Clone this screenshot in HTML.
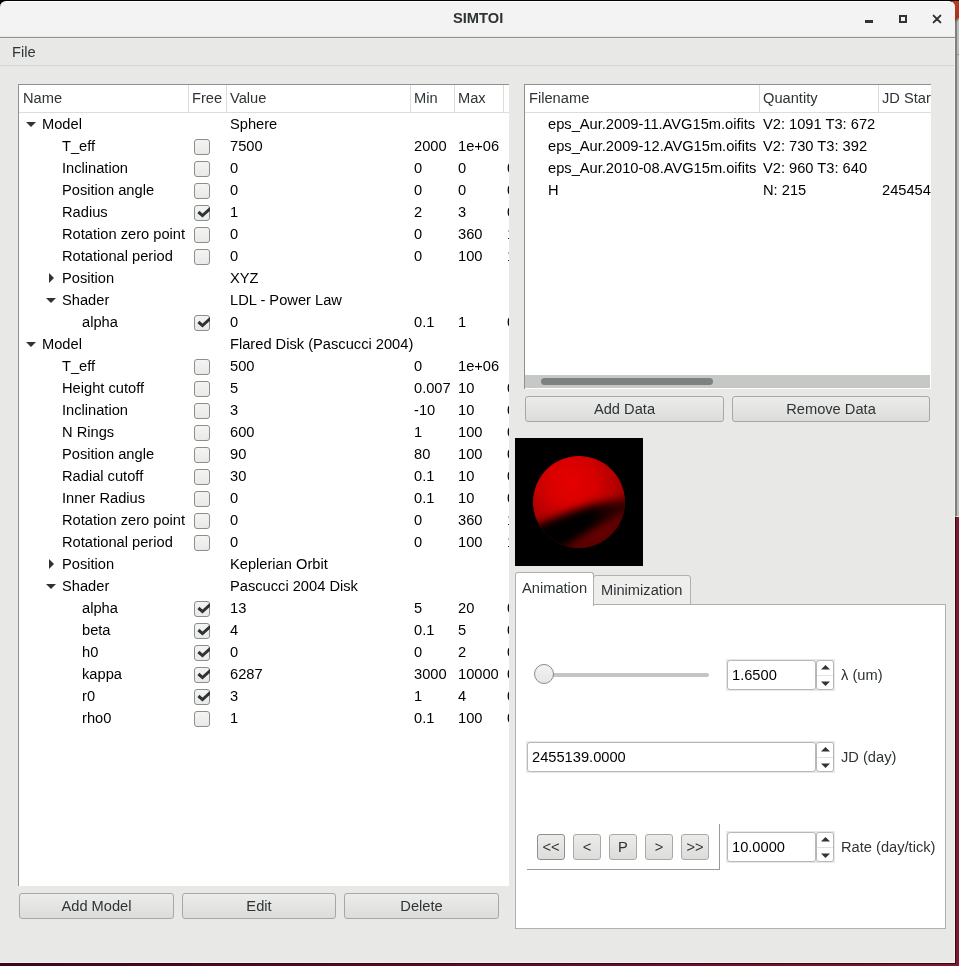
<!DOCTYPE html><html><head><meta charset="utf-8"><style>
*{box-sizing:border-box;margin:0;padding:0}
html,body{width:959px;height:966px;overflow:hidden}
body{position:relative;-webkit-font-smoothing:antialiased;will-change:transform;background:linear-gradient(90deg,#3d0426 0%,#5a0c2c 50%,#7a1a2e 100%);font-family:"Liberation Sans",sans-serif;font-size:14.67px;color:#2e3436}
.a{position:absolute}
.t{position:absolute;white-space:nowrap;line-height:22px;height:22px}
.k{color:#000}
#win{left:0;top:517px;width:956px;height:447px;background:#380614}
#title{left:0;top:1px;width:955px;height:37px;background:linear-gradient(#f3f3f3 0,#f3f3f3 33px,#e6e6e5 35px);border-radius:6px 6px 0 0;border-top:1px solid #fff;border-bottom:1px solid #8f908b}
#main{left:0;top:38px;width:955px;height:925px;background:linear-gradient(#efefee 0,#e8e8e7 1px);border-right:1px solid #f1f2f0;border-bottom:1px solid #f2f3f1}
#menusep{left:0;top:65px;width:954px;height:1px;background:#d5d5d3}
.box{position:absolute;background:#fff;border-left:1px solid #8f918d;border-top:1px solid #8f918d;overflow:hidden}
.hl{position:absolute;left:0;top:27px;height:1px;background:#dcdcda}
.hs{position:absolute;top:0;width:1px;height:27px;background:#dcdcda}
.cb{position:absolute;width:16px;height:16px;border:1px solid #8c8e8b;border-radius:3px;background:linear-gradient(#f4f4f3,#e9e9e8)}
.cb svg{position:absolute;left:-1px;top:-1px}
.btn{position:absolute;height:26px;border:1px solid #a7a8a4;border-radius:3px;background:linear-gradient(#ececeb,#dcdcda);text-align:center;line-height:24px;color:#2e3436}
.ar{position:absolute;width:0;height:0}
</style></head><body>
<div class="a" style="left:950px;top:0;width:9px;height:24px;background:linear-gradient(#c03a26,#a02a1c)"></div>
<div class="a" style="left:955px;top:18px;width:6px;height:499px;background:#bcbcbb;border-left:2px solid #7f7f7f;border-top:1px solid #9a9a98;border-bottom:1px solid #e8e8e8;border-radius:5px 0 0 0"></div>
<div class="a" style="left:956px;top:54px;width:3px;height:1px;background:#8c8c8a"></div>
<div class="a" style="left:0;top:0;width:12px;height:12px;background:#000"></div><div class="a" style="left:940px;top:0;width:12px;height:12px;background:#000"></div>
<div class="a" id="win"></div><div class="a" id="title"></div><div class="a" id="main"></div>
<div class="a" style="left:0;top:0;width:959px;height:1px;background:#000"></div>
<div class="a" style="left:865px;top:20px;width:8px;height:3px;background:#2e3436"></div>
<div class="a" style="left:899px;top:15px;width:8px;height:8px;border:2px solid #2e3436"></div>
<svg class="a" style="left:932px;top:14px" width="10" height="10"><path d="M1.6 1.6 L8.4 8.4 M8.4 1.6 L1.6 8.4" stroke="#2e3436" stroke-width="2" stroke-linecap="round"/></svg>
<div class="t" style="left:453px;top:7px;font-weight:bold">SIMTOI</div>
<div class="a" id="menusep"></div>
<div class="t" style="left:12px;top:41px">File</div>
<div class="box" style="left:18px;top:84px;width:491px;height:802px">
<div class="hl" style="width:600px;top:27px"></div>
<div class="hs" style="left:169px;top:0;height:27px"></div>
<div class="hs" style="left:207px;top:0;height:27px"></div>
<div class="hs" style="left:391px;top:0;height:27px"></div>
<div class="hs" style="left:435px;top:0;height:27px"></div>
<div class="hs" style="left:484px;top:0;height:27px"></div>
<div class="t" style="left:4px;top:2px">Name</div>
<div class="t" style="left:173px;top:2px">Free</div>
<div class="t" style="left:211px;top:2px">Value</div>
<div class="t" style="left:395px;top:2px">Min</div>
<div class="t" style="left:439px;top:2px">Max</div>
<div class="t k" style="left:23px;top:28px">Model</div>
<svg class="a" style="left:7px;top:37px" width="10" height="5"><path d="M0 0 L10 0 L5 5 Z" fill="#2e3436"/></svg>
<div class="t k" style="left:211px;top:28px">Sphere</div>
<div class="t k" style="left:43px;top:50px">T_eff</div>
<div class="cb" style="left:175px;top:54px"></div>
<div class="t k" style="left:211px;top:50px">7500</div>
<div class="t k" style="left:395px;top:50px">2000</div>
<div class="t k" style="left:439px;top:50px">1e+06</div>
<div class="t k" style="left:43px;top:72px">Inclination</div>
<div class="cb" style="left:175px;top:76px"></div>
<div class="t k" style="left:211px;top:72px">0</div>
<div class="t k" style="left:395px;top:72px">0</div>
<div class="t k" style="left:439px;top:72px">0</div>
<div class="t k" style="left:488px;top:72px">0</div>
<div class="t k" style="left:43px;top:94px">Position angle</div>
<div class="cb" style="left:175px;top:98px"></div>
<div class="t k" style="left:211px;top:94px">0</div>
<div class="t k" style="left:395px;top:94px">0</div>
<div class="t k" style="left:439px;top:94px">0</div>
<div class="t k" style="left:488px;top:94px">0</div>
<div class="t k" style="left:43px;top:116px">Radius</div>
<div class="cb" style="left:175px;top:120px"><svg width="16" height="16" viewBox="0 0 16 16"><path d="M4.4 7.0 L8.5 10.6 L16.5 3.4" fill="none" stroke="#2e3436" stroke-width="3" stroke-linejoin="miter"/></svg></div>
<div class="t k" style="left:211px;top:116px">1</div>
<div class="t k" style="left:395px;top:116px">2</div>
<div class="t k" style="left:439px;top:116px">3</div>
<div class="t k" style="left:488px;top:116px">0</div>
<div class="t k" style="left:43px;top:138px">Rotation zero point</div>
<div class="cb" style="left:175px;top:142px"></div>
<div class="t k" style="left:211px;top:138px">0</div>
<div class="t k" style="left:395px;top:138px">0</div>
<div class="t k" style="left:439px;top:138px">360</div>
<div class="t k" style="left:488px;top:138px">1</div>
<div class="t k" style="left:43px;top:160px">Rotational period</div>
<div class="cb" style="left:175px;top:164px"></div>
<div class="t k" style="left:211px;top:160px">0</div>
<div class="t k" style="left:395px;top:160px">0</div>
<div class="t k" style="left:439px;top:160px">100</div>
<div class="t k" style="left:488px;top:160px">1</div>
<div class="t k" style="left:43px;top:182px">Position</div>
<svg class="a" style="left:30px;top:188px" width="5" height="10"><path d="M0 0 L5 5 L0 10 Z" fill="#2e3436"/></svg>
<div class="t k" style="left:211px;top:182px">XYZ</div>
<div class="t k" style="left:43px;top:204px">Shader</div>
<svg class="a" style="left:27px;top:213px" width="10" height="5"><path d="M0 0 L10 0 L5 5 Z" fill="#2e3436"/></svg>
<div class="t k" style="left:211px;top:204px">LDL - Power Law</div>
<div class="t k" style="left:63px;top:226px">alpha</div>
<div class="cb" style="left:175px;top:230px"><svg width="16" height="16" viewBox="0 0 16 16"><path d="M4.4 7.0 L8.5 10.6 L16.5 3.4" fill="none" stroke="#2e3436" stroke-width="3" stroke-linejoin="miter"/></svg></div>
<div class="t k" style="left:211px;top:226px">0</div>
<div class="t k" style="left:395px;top:226px">0.1</div>
<div class="t k" style="left:439px;top:226px">1</div>
<div class="t k" style="left:488px;top:226px">0</div>
<div class="t k" style="left:23px;top:248px">Model</div>
<svg class="a" style="left:7px;top:257px" width="10" height="5"><path d="M0 0 L10 0 L5 5 Z" fill="#2e3436"/></svg>
<div class="t k" style="left:211px;top:248px">Flared Disk (Pascucci 2004)</div>
<div class="t k" style="left:43px;top:270px">T_eff</div>
<div class="cb" style="left:175px;top:274px"></div>
<div class="t k" style="left:211px;top:270px">500</div>
<div class="t k" style="left:395px;top:270px">0</div>
<div class="t k" style="left:439px;top:270px">1e+06</div>
<div class="t k" style="left:43px;top:292px">Height cutoff</div>
<div class="cb" style="left:175px;top:296px"></div>
<div class="t k" style="left:211px;top:292px">5</div>
<div class="t k" style="left:395px;top:292px">0.007</div>
<div class="t k" style="left:439px;top:292px">10</div>
<div class="t k" style="left:488px;top:292px">0</div>
<div class="t k" style="left:43px;top:314px">Inclination</div>
<div class="cb" style="left:175px;top:318px"></div>
<div class="t k" style="left:211px;top:314px">3</div>
<div class="t k" style="left:395px;top:314px">-10</div>
<div class="t k" style="left:439px;top:314px">10</div>
<div class="t k" style="left:488px;top:314px">0</div>
<div class="t k" style="left:43px;top:336px">N Rings</div>
<div class="cb" style="left:175px;top:340px"></div>
<div class="t k" style="left:211px;top:336px">600</div>
<div class="t k" style="left:395px;top:336px">1</div>
<div class="t k" style="left:439px;top:336px">100</div>
<div class="t k" style="left:488px;top:336px">0</div>
<div class="t k" style="left:43px;top:358px">Position angle</div>
<div class="cb" style="left:175px;top:362px"></div>
<div class="t k" style="left:211px;top:358px">90</div>
<div class="t k" style="left:395px;top:358px">80</div>
<div class="t k" style="left:439px;top:358px">100</div>
<div class="t k" style="left:488px;top:358px">0</div>
<div class="t k" style="left:43px;top:380px">Radial cutoff</div>
<div class="cb" style="left:175px;top:384px"></div>
<div class="t k" style="left:211px;top:380px">30</div>
<div class="t k" style="left:395px;top:380px">0.1</div>
<div class="t k" style="left:439px;top:380px">10</div>
<div class="t k" style="left:488px;top:380px">0</div>
<div class="t k" style="left:43px;top:402px">Inner Radius</div>
<div class="cb" style="left:175px;top:406px"></div>
<div class="t k" style="left:211px;top:402px">0</div>
<div class="t k" style="left:395px;top:402px">0.1</div>
<div class="t k" style="left:439px;top:402px">10</div>
<div class="t k" style="left:488px;top:402px">0</div>
<div class="t k" style="left:43px;top:424px">Rotation zero point</div>
<div class="cb" style="left:175px;top:428px"></div>
<div class="t k" style="left:211px;top:424px">0</div>
<div class="t k" style="left:395px;top:424px">0</div>
<div class="t k" style="left:439px;top:424px">360</div>
<div class="t k" style="left:488px;top:424px">1</div>
<div class="t k" style="left:43px;top:446px">Rotational period</div>
<div class="cb" style="left:175px;top:450px"></div>
<div class="t k" style="left:211px;top:446px">0</div>
<div class="t k" style="left:395px;top:446px">0</div>
<div class="t k" style="left:439px;top:446px">100</div>
<div class="t k" style="left:488px;top:446px">1</div>
<div class="t k" style="left:43px;top:468px">Position</div>
<svg class="a" style="left:30px;top:474px" width="5" height="10"><path d="M0 0 L5 5 L0 10 Z" fill="#2e3436"/></svg>
<div class="t k" style="left:211px;top:468px">Keplerian Orbit</div>
<div class="t k" style="left:43px;top:490px">Shader</div>
<svg class="a" style="left:27px;top:499px" width="10" height="5"><path d="M0 0 L10 0 L5 5 Z" fill="#2e3436"/></svg>
<div class="t k" style="left:211px;top:490px">Pascucci 2004 Disk</div>
<div class="t k" style="left:63px;top:512px">alpha</div>
<div class="cb" style="left:175px;top:516px"><svg width="16" height="16" viewBox="0 0 16 16"><path d="M4.4 7.0 L8.5 10.6 L16.5 3.4" fill="none" stroke="#2e3436" stroke-width="3" stroke-linejoin="miter"/></svg></div>
<div class="t k" style="left:211px;top:512px">13</div>
<div class="t k" style="left:395px;top:512px">5</div>
<div class="t k" style="left:439px;top:512px">20</div>
<div class="t k" style="left:488px;top:512px">0</div>
<div class="t k" style="left:63px;top:534px">beta</div>
<div class="cb" style="left:175px;top:538px"><svg width="16" height="16" viewBox="0 0 16 16"><path d="M4.4 7.0 L8.5 10.6 L16.5 3.4" fill="none" stroke="#2e3436" stroke-width="3" stroke-linejoin="miter"/></svg></div>
<div class="t k" style="left:211px;top:534px">4</div>
<div class="t k" style="left:395px;top:534px">0.1</div>
<div class="t k" style="left:439px;top:534px">5</div>
<div class="t k" style="left:488px;top:534px">0</div>
<div class="t k" style="left:63px;top:556px">h0</div>
<div class="cb" style="left:175px;top:560px"><svg width="16" height="16" viewBox="0 0 16 16"><path d="M4.4 7.0 L8.5 10.6 L16.5 3.4" fill="none" stroke="#2e3436" stroke-width="3" stroke-linejoin="miter"/></svg></div>
<div class="t k" style="left:211px;top:556px">0</div>
<div class="t k" style="left:395px;top:556px">0</div>
<div class="t k" style="left:439px;top:556px">2</div>
<div class="t k" style="left:488px;top:556px">0</div>
<div class="t k" style="left:63px;top:578px">kappa</div>
<div class="cb" style="left:175px;top:582px"><svg width="16" height="16" viewBox="0 0 16 16"><path d="M4.4 7.0 L8.5 10.6 L16.5 3.4" fill="none" stroke="#2e3436" stroke-width="3" stroke-linejoin="miter"/></svg></div>
<div class="t k" style="left:211px;top:578px">6287</div>
<div class="t k" style="left:395px;top:578px">3000</div>
<div class="t k" style="left:439px;top:578px">10000</div>
<div class="t k" style="left:488px;top:578px">0</div>
<div class="t k" style="left:63px;top:600px">r0</div>
<div class="cb" style="left:175px;top:604px"><svg width="16" height="16" viewBox="0 0 16 16"><path d="M4.4 7.0 L8.5 10.6 L16.5 3.4" fill="none" stroke="#2e3436" stroke-width="3" stroke-linejoin="miter"/></svg></div>
<div class="t k" style="left:211px;top:600px">3</div>
<div class="t k" style="left:395px;top:600px">1</div>
<div class="t k" style="left:439px;top:600px">4</div>
<div class="t k" style="left:488px;top:600px">0</div>
<div class="t k" style="left:63px;top:622px">rho0</div>
<div class="cb" style="left:175px;top:626px"></div>
<div class="t k" style="left:211px;top:622px">1</div>
<div class="t k" style="left:395px;top:622px">0.1</div>
<div class="t k" style="left:439px;top:622px">100</div>
<div class="t k" style="left:488px;top:622px">0</div>
</div>
<div class="box" style="left:524px;top:84px;width:407px;height:305px">
<div class="hl" style="width:600px;top:27px"></div>
<div class="hs" style="left:234px;top:0;height:27px"></div>
<div class="hs" style="left:353px;top:0;height:27px"></div>
<div class="t" style="left:4px;top:2px">Filename</div>
<div class="t" style="left:238px;top:2px">Quantity</div>
<div class="t" style="left:357px;top:2px">JD Start</div>
<div class="t k" style="left:23px;top:28px">eps_Aur.2009-11.AVG15m.oifits</div>
<div class="t k" style="left:238px;top:28px">V2: 1091 T3: 672</div>
<div class="t k" style="left:23px;top:50px">eps_Aur.2009-12.AVG15m.oifits</div>
<div class="t k" style="left:238px;top:50px">V2: 730 T3: 392</div>
<div class="t k" style="left:23px;top:72px">eps_Aur.2010-08.AVG15m.oifits</div>
<div class="t k" style="left:238px;top:72px">V2: 960 T3: 640</div>
<div class="t k" style="left:23px;top:94px">H</div>
<div class="t k" style="left:238px;top:94px">N: 215</div>
<div class="t k" style="left:357px;top:94px">2454545</div>
<div class="a" style="left:0;top:290px;width:405px;height:13px;background:#c6c8c6"></div>
<div class="a" style="left:16px;top:293px;width:172px;height:7px;border-radius:4px;background:#7d8182"></div>
</div>
<div class="btn" style="left:525px;top:396px;width:199px">Add Data</div>
<div class="btn" style="left:732px;top:396px;width:198px">Remove Data</div>
<svg class="a" style="left:515px;top:438px" width="128" height="128" viewBox="515 438 128 128">
<defs>
<radialGradient id="sg" cx="571" cy="483" r="66" gradientUnits="userSpaceOnUse">
<stop offset="0" stop-color="#e60000"/><stop offset="0.35" stop-color="#d80000"/><stop offset="0.7" stop-color="#b00000"/><stop offset="1" stop-color="#800000"/></radialGradient>
<linearGradient id="bg2" x1="540" y1="0" x2="630" y2="0" gradientUnits="userSpaceOnUse"><stop offset="0" stop-color="#000" stop-opacity="1"/><stop offset="0.55" stop-color="#000" stop-opacity="1"/><stop offset="1" stop-color="#000" stop-opacity="0.6"/></linearGradient>
<clipPath id="sc"><circle cx="579" cy="502" r="46"/></clipPath>
<filter id="bl" x="-50%" y="-50%" width="200%" height="200%"><feGaussianBlur stdDeviation="4.5"/></filter>
</defs>
<rect x="515" y="438" width="128" height="128" fill="#000"/>
<circle cx="579" cy="502" r="46" fill="url(#sg)"/>
<g clip-path="url(#sc)">
<path d="M510,539 L538.6,524.5 Q577,508 597,503.5 L618,500 L648,496 L648,503 L620,516 L594,530 L568,546 L510,582 Z" fill="url(#bg2)" filter="url(#bl)"/><path d="M648,503 L620,516 L594,530 L568,546 L510,582 L510,600 L648,600 Z" fill="#000" fill-opacity="0.3" filter="url(#bl)"/>
</g>
</svg>
<div class="a" style="left:515px;top:604px;width:431px;height:325px;background:#fff;border:1px solid #b0b1ad"></div>
<div class="a" style="left:593px;top:575px;width:98px;height:30px;background:#eeeeed;border:1px solid #b0b1ad;border-radius:3px 3px 0 0"></div>
<div class="a" style="left:515px;top:572px;width:79px;height:34px;background:#fff;border:1px solid #b0b1ad;border-bottom:none;border-radius:3px 3px 0 0"></div>
<div class="t" style="left:522px;top:577px">Animation</div>
<div class="t" style="left:601px;top:578.5px">Minimization</div>
<div class="a" style="left:543px;top:673px;width:166px;height:4px;border-radius:2px;background:#c4c4c2"></div>
<div class="a" style="left:534px;top:664px;width:20px;height:20px;border-radius:50%;border:1px solid #8b8c88;background:linear-gradient(#f3f3f3,#e6e6e5)"></div>
<div class="a" style="left:726px;top:659px;width:109px;height:32px;background:#e8e8e7"></div>
<div class="a" style="left:727px;top:660px;width:89px;height:30px;background:#fff;border:1px solid #b8b9b5;border-radius:3px"></div>
<div class="a" style="left:816px;top:660px;width:18px;height:30px;background:#fff;border:1px solid #b8b9b5;border-radius:3px"></div>
<div class="a" style="left:817px;top:675px;width:16px;height:1px;background:#e2e2e0"></div>
<svg class="a" style="left:821px;top:665px" width="9" height="5"><path d="M0 4.5 L4.5 0 L9 4.5 Z" fill="#2e3436"/></svg>
<svg class="a" style="left:821px;top:681px" width="9" height="5"><path d="M0 0.5 L9 0.5 L4.5 5 Z" fill="#2e3436"/></svg>
<div class="t k" style="left:732px;top:664px">1.6500</div>
<div class="t" style="left:841px;top:664px">&#955; (um)</div>
<div class="a" style="left:526px;top:741px;width:309px;height:32px;background:#e8e8e7"></div>
<div class="a" style="left:527px;top:742px;width:289px;height:30px;background:#fff;border:1px solid #b8b9b5;border-radius:3px"></div>
<div class="a" style="left:816px;top:742px;width:18px;height:30px;background:#fff;border:1px solid #b8b9b5;border-radius:3px"></div>
<div class="a" style="left:817px;top:757px;width:16px;height:1px;background:#e2e2e0"></div>
<svg class="a" style="left:821px;top:747px" width="9" height="5"><path d="M0 4.5 L4.5 0 L9 4.5 Z" fill="#2e3436"/></svg>
<svg class="a" style="left:821px;top:763px" width="9" height="5"><path d="M0 0.5 L9 0.5 L4.5 5 Z" fill="#2e3436"/></svg>
<div class="t k" style="left:532px;top:746px">2455139.0000</div>
<div class="t" style="left:841px;top:746px">JD (day)</div>
<div class="a" style="left:726px;top:831px;width:109px;height:32px;background:#e8e8e7"></div>
<div class="a" style="left:727px;top:832px;width:89px;height:30px;background:#fff;border:1px solid #b8b9b5;border-radius:3px"></div>
<div class="a" style="left:816px;top:832px;width:18px;height:30px;background:#fff;border:1px solid #b8b9b5;border-radius:3px"></div>
<div class="a" style="left:817px;top:847px;width:16px;height:1px;background:#e2e2e0"></div>
<svg class="a" style="left:821px;top:837px" width="9" height="5"><path d="M0 4.5 L4.5 0 L9 4.5 Z" fill="#2e3436"/></svg>
<svg class="a" style="left:821px;top:853px" width="9" height="5"><path d="M0 0.5 L9 0.5 L4.5 5 Z" fill="#2e3436"/></svg>
<div class="t k" style="left:732px;top:836px">10.0000</div>
<div class="t" style="left:841px;top:836px">Rate (day/tick)</div>
<div class="a" style="left:719px;top:824px;width:1px;height:46px;background:#9a9b97"></div>
<div class="a" style="left:527px;top:869px;width:193px;height:1px;background:#9a9b97"></div>
<div class="btn" style="left:537px;top:834px;width:28px;height:26px;border-color:#8f908c">&lt;&lt;</div>
<div class="btn" style="left:573px;top:834px;width:28px;height:26px;border-color:#a9aaa6">&lt;</div>
<div class="btn" style="left:609px;top:834px;width:28px;height:26px;border-color:#a9aaa6">P</div>
<div class="btn" style="left:645px;top:834px;width:28px;height:26px;border-color:#a9aaa6">&gt;</div>
<div class="btn" style="left:681px;top:834px;width:28px;height:26px;border-color:#a9aaa6">&gt;&gt;</div>
<div class="btn" style="left:19px;top:893px;width:155px">Add Model</div>
<div class="btn" style="left:182px;top:893px;width:154px">Edit</div>
<div class="btn" style="left:344px;top:893px;width:155px">Delete</div>
</body></html>
